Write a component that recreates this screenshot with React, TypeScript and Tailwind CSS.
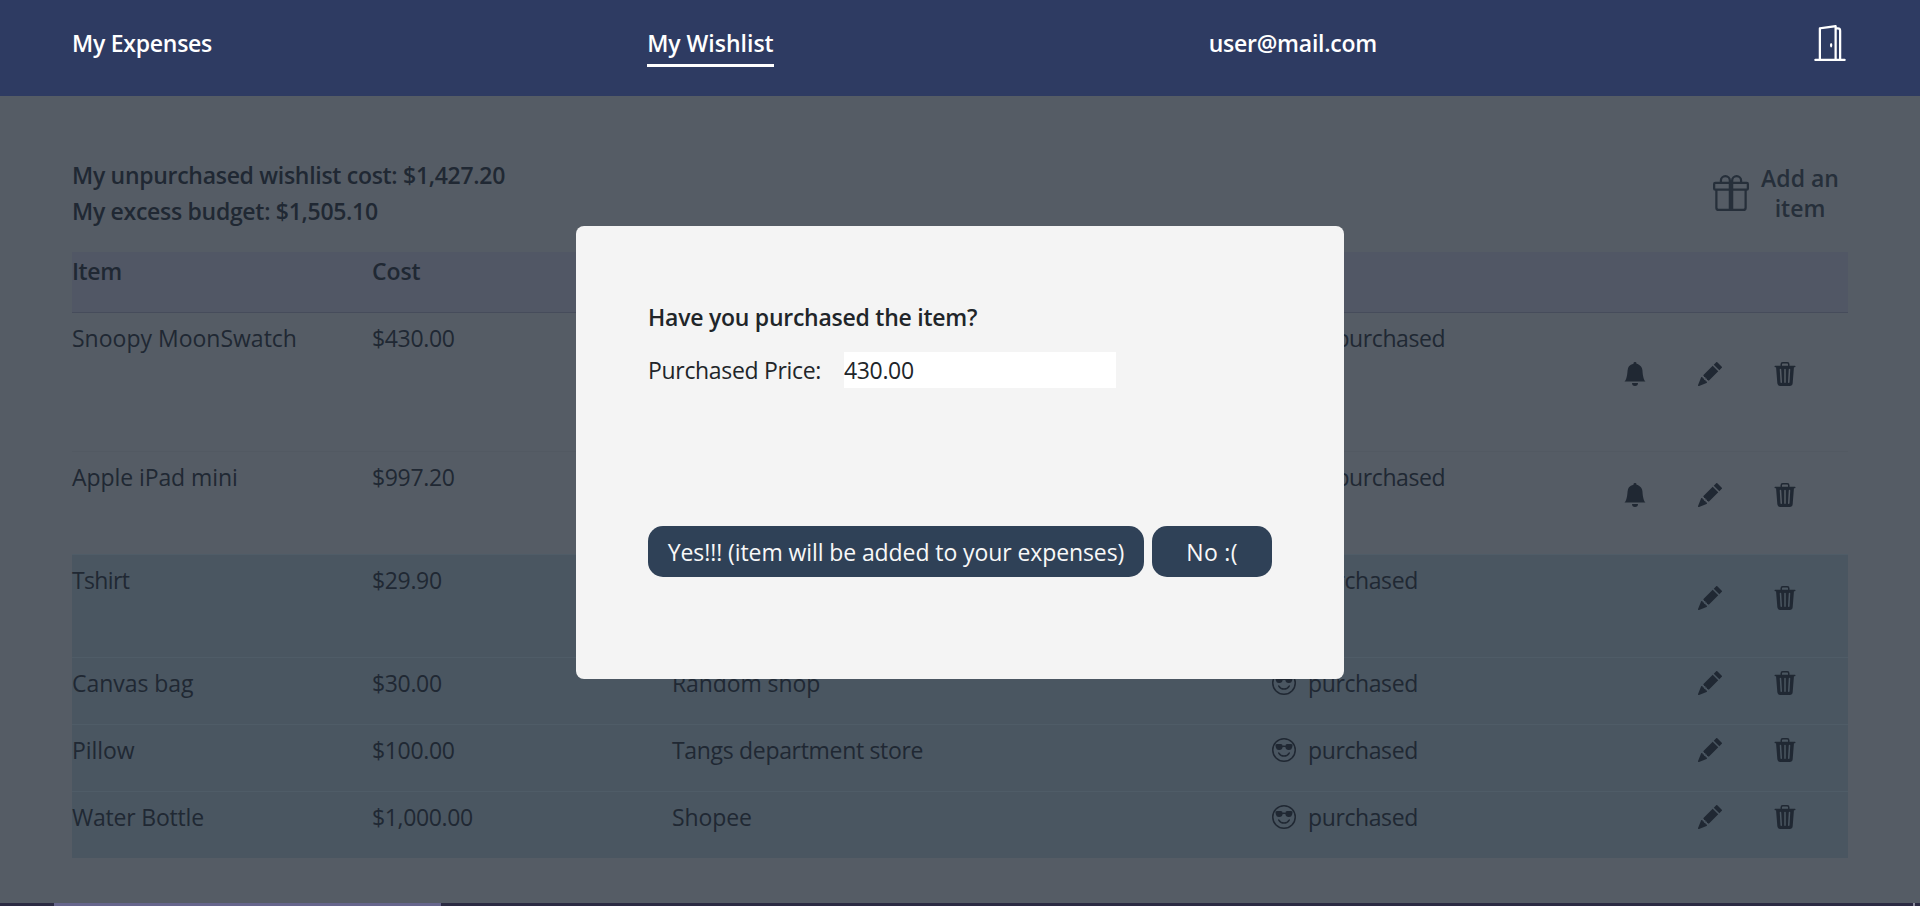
import React from "react";
import {
  BsBellFill,
  BsDoorOpen,
  BsEmojiSunglasses,
  BsEmojiFrown,
  BsGift,
  BsPencilFill,
  BsTrash3Fill,
} from "react-icons/bs";

type Item = {
  name: string;
  nameTracking: string;
  cost: string;
  shop: string;
  shopTracking: string;
  purchased: boolean;
  height: string;
  border: string;
};

const items: Item[] = [
  { name: "Snoopy MoonSwatch", nameTracking: "tracking-[0px]", cost: "$430.00", shop: "", shopTracking: "", purchased: false, height: "h-[139px]", border: "border-[#464c5b]" },
  { name: "Apple iPad mini", nameTracking: "tracking-[-0.08px]", cost: "$997.20", shop: "", shopTracking: "", purchased: false, height: "h-[103px]", border: "border-[#525962]" },
  { name: "Tshirt", nameTracking: "tracking-[-0.65px]", cost: "$29.90", shop: "", shopTracking: "", purchased: true, height: "h-[103px]", border: "border-[#4f5c67]" },
  { name: "Canvas bag", nameTracking: "tracking-[-0.05px]", cost: "$30.00", shop: "Random shop", shopTracking: "tracking-[-0.1px]", purchased: true, height: "h-[67px]", border: "border-[#4f5c67]" },
  { name: "Pillow", nameTracking: "tracking-[-0.05px]", cost: "$100.00", shop: "Tangs department store", shopTracking: "tracking-[-0.32px]", purchased: true, height: "h-[67px]", border: "border-[#4f5c67]" },
  { name: "Water Bottle", nameTracking: "tracking-[-0.2px]", cost: "$1,000.00", shop: "Shopee", shopTracking: "tracking-[-0.1px]", purchased: true, height: "h-[67px]", border: "border-[#4f5c67]" },
];

function NavBar() {
  return (
    <nav className="flex h-24 items-start justify-between bg-[#2e3b62] px-[72px] font-semibold text-white">
      <a className="mt-[25px] tracking-[-0.25px]">My Expenses</a>
      <a className="mt-[25px] h-[42px] border-b-[3px] border-white">My Wishlist</a>
      <span className="mt-[25px] tracking-[-0.25px]">user@mail.com</span>
      <BsDoorOpen className="mt-[25px] size-9" />
    </nav>
  );
}

function Summary() {
  return (
    <section className="flex h-[156px] justify-between pt-[61px] font-semibold">
      <div className="tracking-[-0.29px]">
        <p>My unpurchased wishlist cost: $1,427.20</p>
        <p>My excess budget: $1,505.10</p>
      </div>
      <button className="mt-1.5 flex items-start gap-[3px] text-[#262f3a]">
        <BsGift className="mt-3 size-9" />
        <span className="w-24 text-center leading-[30px] whitespace-normal">Add an item</span>
      </button>
    </section>
  );
}

function Row({ item }: { item: Item }) {
  return (
    <div
      className={`grid grid-cols-[300px_300px_600px_300px_1fr] border-t ${item.border} ${item.height} ${item.purchased ? "bg-[#4a5661]" : ""}`}
    >
      <span className={`pt-[7px] ${item.nameTracking}`}>{item.name}</span>
      <span className="pt-[7px] tracking-[-0.35px]">{item.cost}</span>
      <span className={`pt-[7px] ${item.shopTracking}`}>{item.shop}</span>
      <span className="flex items-start gap-3 pt-[7px] tracking-[-0.4px]">
        {item.purchased ? <BsEmojiSunglasses className="mt-1.5 size-6" /> : <BsEmojiFrown className="mt-1.5 size-6" />}
        {item.purchased ? "purchased" : "unpurchased"}
      </span>
      <div className="flex items-center justify-end gap-[51px] pr-[51px] pb-4">
        {!item.purchased && <BsBellFill className="size-6" />}
        <BsPencilFill className="size-6" />
        <BsTrash3Fill className="size-6" />
      </div>
    </div>
  );
}

function PurchaseDialog() {
  return (
    <div className="fixed inset-0 flex items-start justify-center pt-[226px]">
      <div className="flex h-[453px] w-[768px] flex-col items-start rounded-lg bg-[#f4f4f4] px-[72px] pt-[73px] text-[#212529]">
        <h2 className="font-semibold tracking-[-0.25px]">Have you purchased the item?</h2>
        <label className="mt-[17px] flex items-center tracking-[-0.32px]">
          <span className="w-[196px]">Purchased Price:</span>
          <input className="h-9 w-[272px] bg-white tracking-[-0.35px] outline-none" defaultValue="430.00" />
        </label>
        <div className="mt-[138px] flex gap-2 text-[#f8f8f8]">
          <button className="h-[51px] w-[496px] rounded-[15px] bg-[#2f4157] tracking-[-0.09px]">
            Yes!!! (item will be added to your expenses)
          </button>
          <button className="h-[51px] w-[120px] rounded-[15px] bg-[#2f4157] tracking-[0.3px]">No :(</button>
        </div>
      </div>
    </div>
  );
}

export default function App() {
  return (
    <div className="flex h-[906px] flex-col overflow-hidden bg-[#555c65] font-['Open_Sans','Noto_Sans',sans-serif] text-[23px] leading-9 whitespace-nowrap text-[#202833]">
      <NavBar />
      <main className="flex-1 px-[72px]">
        <Summary />
        <div className="grid h-[60px] grid-cols-[300px_1fr] bg-[#515765] pt-px font-semibold">
          <span className="tracking-[-0.4px]">Item</span>
          <span className="tracking-[-0.1px]">Cost</span>
        </div>
        {items.map((item) => (
          <Row key={item.name} item={item} />
        ))}
      </main>
      <footer className="flex h-[3px] justify-between bg-[#2b2a42] pr-[5px] pl-[54px]">
        <div className="w-[387px] bg-[#66658c]" />
        <div className="w-0.5 bg-[#8a8a9c]" />
      </footer>
      <PurchaseDialog />
    </div>
  );
}
